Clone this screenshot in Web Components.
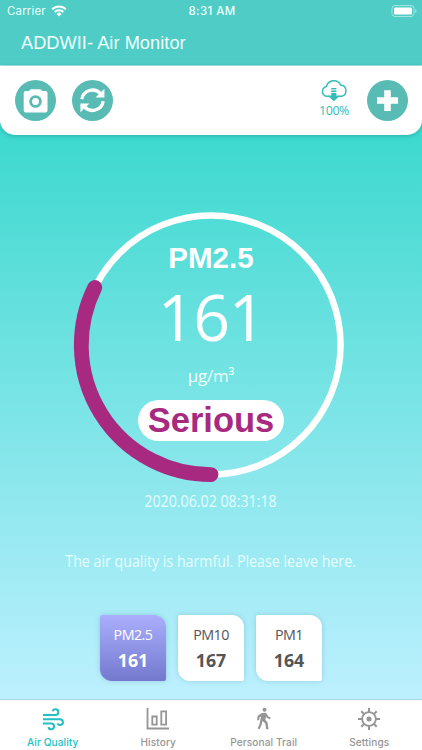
<!DOCTYPE html>
<html lang="en">
<head>
<meta charset="utf-8">
<title>ADDWII- Air Monitor</title>
<style>
  body {
    margin: 0;
    font-family: "Open Sans", "Noto Sans", sans-serif;
  }
</style>
</head>
<body>
<air-monitor></air-monitor>

<script>
function define(name, html, init) {
  const template = document.createElement("template");
  template.innerHTML = html;
  window.customElements.define(name, class extends HTMLElement {
    constructor() {
      super();
      this.attachShadow({ mode: "open" });
      this.shadowRoot.appendChild(template.content.cloneNode(true));
    }

    connectedCallback() {
      if (init) init(this, this.shadowRoot);
    }
  });
}

define("status-bar", `
<style>
  :host {
    display: grid;
    grid-template-columns: 1fr auto 1fr;
    align-items: center;
    height: 22px;
    padding: 0 5px 0 7px;
    color: #eafffc;
    font: 11.5px/22px Inter, sans-serif;
  }
  .carrier { display: flex; align-items: center; gap: 5px; letter-spacing: .15px; }
  .time { font-weight: 500; font-size: 11.5px; letter-spacing: .4px; }
  .battery { justify-self: end; }
  svg { display: block; }
</style>
<div class="carrier"><span>Carrier</span>
  <svg width="16" height="12" viewBox="0 0 16 12" fill="none" stroke="#fff" stroke-width="2.1">
    <path d="M1.2 4.3a9.6 9.6 0 0 1 13.6 0M3.7 7a6.1 6.1 0 0 1 8.6 0"/>
    <path d="M8 11.4 5.5 8.9a3.5 3.5 0 0 1 5 0z" fill="#fff" stroke="none"/>
  </svg>
</div>
<div class="time">8:31 AM</div>
<svg class="battery" width="26" height="12" viewBox="0 0 26 12">
  <rect x="1" y=".5" width="22" height="11" rx="3" fill="none" stroke="#a5e6e1"/>
  <rect x="3" y="2.5" width="18" height="7" rx="1.2" fill="#fff"/>
  <path d="M24.3 4v4a2.2 2.2 0 0 0 0-4z" fill="#a5e6e1"/>
</svg>
`);

define("title-bar", `
<style>
  :host {
    display: block;
    height: 43px;
    padding-left: 21px;
    box-sizing: border-box;
    color: #f2fffe;
    font: 18.2px/43px "Liberation Sans", sans-serif;
    letter-spacing: .05px;
  }
</style>
<slot></slot>
`);

const actions = {
  camera: `<path fill-rule="evenodd" fill="#fff" d="M10.7 11.1h3.4l1.5-1.8h9.9l1.7 1.8h3.3a2 2 0 0 1 2 2v17.5a2 2 0 0 1-2 2H10.7a2 2 0 0 1-2-2V13.1a2 2 0 0 1 2-2zm9.8 4.1a6.3 6.3 0 1 0 0 12.6 6.3 6.3 0 0 0 0-12.6z"/>
    <circle cx="20.5" cy="21.5" r="3.5" fill="#fff"/>`,
  refresh: `<path fill="none" stroke="#fff" stroke-width="3.3" d="M9.8 19.2a10.8 10.8 0 0 1 18.8-5.4M31.2 21.3a10.8 10.8 0 0 1-18.8 5.4"/>
    <path fill="#fff" d="M32.4 8.8v8.8h-8.9zM8.4 32.3v-8.8h9z"/>`,
  add: `<path fill="#fff" d="M17.2 10.2h6.6v7h7.3v6.6h-7.3v7.1h-6.6v-7.1H10v-6.6h7.2z"/>`
};

define("round-button", `
<style>
  :host { display: block; width: 41px; height: 41px; border-radius: 50%; background: #58bcb5; }
  svg { display: block; }
</style>
<svg width="41" height="41" viewBox="0 0 41 41"></svg>
`, (el, root) => {
  root.querySelector("svg").innerHTML = actions[el.getAttribute("icon")];
});

define("cloud-sync", `
<style>
  :host { display: flex; flex-direction: column; align-items: center; width: 34px; height: 41px; color: #36bdb6; font-size: 12.5px; line-height: 15px; }
  svg { display: block; }
  span { white-space: nowrap; letter-spacing: -.45px; }
</style>
<svg width="28" height="23" viewBox="0 0 28 23">
  <path fill="none" stroke="currentColor" stroke-width="1.5" d="M10.5 16.3H6.3A5.1 5.1 0 0 1 6.5 6.4 7.7 7.7 0 0 1 20.8 5.1a5.7 5.7 0 0 1 .8 11.2h-4.1"/>
  <path fill="currentColor" d="M11.2 8h5.2v1.5h-5.2zM11.2 10.5h5.2V12h-5.2zM11.2 13h5.2v2.8h3.4l-6 5.5-5.9-5.5h3.3z"/>
</svg>
<span><slot></slot></span>
`);

define("tool-bar", `
<style>
  :host {
    display: flex;
    align-items: center;
    height: 69px;
    margin-top: 1px;
    padding: 0 14px 0 15px;
    box-sizing: border-box;
    background: #fff;
    border-radius: 0 0 15px 15px;
    box-shadow: 0 1px 4px rgba(0, 90, 90, .3);
  }
  .group { display: flex; align-items: center; gap: 16px; }
  .end { margin-left: auto; }
</style>
<div class="group">
  <round-button icon="camera"></round-button>
  <round-button icon="refresh"></round-button>
</div>
<div class="group end">
  <cloud-sync>100%</cloud-sync>
  <round-button icon="add"></round-button>
</div>
`);

define("air-gauge", `
<style>
  :host { display: grid; width: 276px; height: 276px; }
  svg, .values { grid-area: 1 / 1; }
  .values {
    display: flex;
    flex-direction: column;
    align-items: center;
    box-sizing: border-box;
    padding-top: 34px;
    color: #fff;
    font-family: "Liberation Sans", sans-serif;
  }
  .name { font-size: 29.5px; line-height: 34px; font-weight: bold; }
  .value { font: 64.5px/74px "Open Sans", sans-serif; margin-top: 4px; letter-spacing: -1.3px; }
  .unit { font: 17px/24px "Open Sans", sans-serif; margin-top: 11px; color: #effffe; letter-spacing: -.2px; }
  .level {
    width: 146px;
    height: 41px;
    margin-top: 12px;
    border-radius: 21px;
    background: #fff;
    color: #a82a80;
    font-size: 34.5px;
    line-height: 41px;
    font-weight: bold;
    text-align: center;
  }
</style>
<svg width="276" height="276" viewBox="0 0 276 276" fill="none">
  <circle cx="138" cy="138" r="129.6" stroke="#fff" stroke-width="6.5"/>
  <path d="M138 267.6A129.6 129.6 0 0 1 21.8 80.4" stroke="#a82a80" stroke-width="14.8" stroke-linecap="round"/>
</svg>
<div class="values">
  <div class="name"><slot name="name"></slot></div>
  <div class="value"><slot name="value"></slot></div>
  <div class="unit"><slot name="unit"></slot></div>
  <div class="level"><slot name="level"></slot></div>
</div>
`);

define("reading-card", `
<style>
  :host {
    display: flex;
    flex-direction: column;
    align-items: center;
    width: 66px;
    height: 66px;
    padding-top: 10px;
    box-sizing: border-box;
    border-radius: 2px 12px 2px 12px;
    background: #fff;
    color: #555;
    box-shadow: 0 0 5px rgba(50, 110, 130, .25);
  }
  :host([active]) { background: linear-gradient(#aaaefc, #7479cf); color: #fff; }
  .label { font-size: 14.3px; line-height: 20px; letter-spacing: -.55px; }
  .value { font: bold 17.8px/24px "Noto Sans", sans-serif; margin-top: 3px; letter-spacing: 0; }
</style>
<div class="label"><slot></slot></div>
<div class="value"></div>
`, (el, root) => {
  root.querySelector(".value").textContent = el.getAttribute("value");
});

const tabs = {
  wind: `<path stroke-width="2" d="M2 8h12.5a2.9 2.9 0 1 0-2.8-3.7M2 12.2h17a2.9 2.9 0 1 1-2.6 4.2M2 16.4h8.2a2.9 2.9 0 1 1-2.8 3.7"/>`,
  chart: `<path stroke-width="1.8" d="M1.5 1v20.5H23M6.3 9.5h4.4v8.2H6.3zM15.3 4.3h4.8v13.4h-4.8z"/>`,
  walk: `<circle cx="12.5" cy="2.8" r="2" fill="currentColor" stroke="none"/>
    <path fill="currentColor" stroke="none" d="M9.3 6.2 13 5.7l1.9 1 1.2 2.6 2.6 1.2-.8 1.8-3.2-1.5-.7-1.2-.6 3.4 2.1 2.3 1 7h-2.3l-.9-5.8-2.8-2.6-.8 3.9-2.1 4.5-2-.9 1.9-4.2 1.5-7.7-1.4.7-.4 3H5.1l.6-4.4z"/>`,
  gear: `<circle cx="12" cy="12" r="6.9" stroke-width="1.8"/><circle cx="12" cy="12" r="2.5" fill="currentColor" stroke="none"/>
    <path stroke-width="2" d="M12 5V1M12 19v4M5 12H1M19 12h4M7 7 4.3 4.3M17 17l2.7 2.7M7 17l-2.7 2.7M17 7l2.7-2.7"/>`
};

define("tab-item", `
<style>
  :host {
    display: flex;
    flex-direction: column;
    align-items: center;
    padding-top: 7px;
    color: #959595;
    font: 500 10.1px/15px Inter, sans-serif;
    letter-spacing: .1px;
  }
  :host([active]) { color: #22bfc2; }
  svg { display: block; margin-bottom: 4px; }
</style>
<svg width="24" height="24" viewBox="0 0 24 24" fill="none" stroke="currentColor"></svg>
<span><slot></slot></span>
`, (el, root) => {
  root.querySelector("svg").innerHTML = tabs[el.getAttribute("icon")];
});

define("tab-bar", `
<style>
  :host {
    display: grid;
    grid-template-columns: repeat(4, 1fr);
    height: 51px;
    box-sizing: border-box;
    border-top: 1px solid #a9d9e4;
    background: #fff;
  }
</style>
<slot></slot>
`);

define("air-monitor", `
<style>
  :host {
    display: flex;
    flex-direction: column;
    height: 750px;
    overflow: hidden;
    background: linear-gradient(#a5e6e2 66px, #3dd9cf 66px, #3dd9cf 135px, #bdf0ff 699px);
  }
  header { background: #4eccc5; }
  main { flex: 1; display: flex; flex-direction: column; align-items: center; padding-top: 72px; }
  /* slightly condensed, so the caption keeps its height on narrow screens */
  .date, .message { color: #e7fdff; font-size: 16px; line-height: 22px; white-space: nowrap; transform: scaleX(.888); }
  .date { margin-top: 7px; }
  .message { margin-top: 38px; }
  .cards { display: flex; gap: 12px; margin-top: 43px; }
</style>
<header>
  <status-bar></status-bar>
  <title-bar>ADDWII- Air Monitor</title-bar>
</header>
<tool-bar></tool-bar>
<main>
  <air-gauge>
    <span slot="name">PM2.5</span>
    <span slot="value">161</span>
    <span slot="unit">µg/m³</span>
    <span slot="level">Serious</span>
  </air-gauge>
  <div class="date">2020.06.02 08:31:18</div>
  <div class="message">The air quality is harmful. Please leave here.</div>
  <div class="cards">
    <reading-card value="161" active>PM2.5</reading-card>
    <reading-card value="167">PM10</reading-card>
    <reading-card value="164">PM1</reading-card>
  </div>
</main>
<tab-bar>
  <tab-item icon="wind" active>Air Quality</tab-item>
  <tab-item icon="chart">History</tab-item>
  <tab-item icon="walk">Personal Trail</tab-item>
  <tab-item icon="gear">Settings</tab-item>
</tab-bar>
`);
</script>
</body>
</html>
